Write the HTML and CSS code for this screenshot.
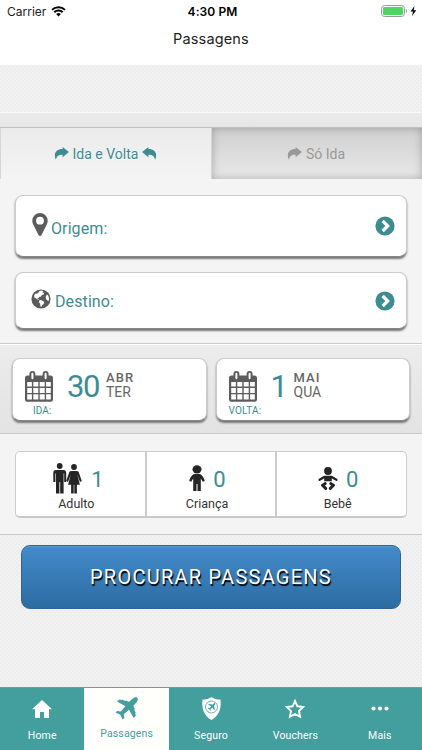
FILE: index.html
```
<!DOCTYPE html>
<html lang="pt-BR">
<head>
<meta charset="utf-8">
<title>Passagens</title>
<link rel="stylesheet" href="styles.css">
</head>
<body>
<svg class="defs" width="0" height="0">
  <defs>
    <symbol id="share" viewBox="0 0 15 13"><path d="M8.600 0 14.900 5.100 8.600 10.200V7.700C5 7.400 2.800 8.600 1.900 12.800-.9 7 2 2.100 8.600 2.100Z"/></symbol>
    <symbol id="chevron" viewBox="0 0 20 20"><circle cx="10" cy="10" r="9.600"/><path d="M7.700 5 12.700 10 7.700 15" fill="none" stroke="#fff" stroke-width="3.200"/></symbol>
    <symbol id="calendar" viewBox="0 0 28 31"><path fill-rule="evenodd" d="M2.500 4.500H4.400V3a3 3 0 0 1 6 0V4.500h7.200V3a3 3 0 0 1 6 0V4.500h1.900A2.500 2.500 0 0 1 28 7v21.500a2.300 2.300 0 0 1-2.500 2.300h-23A2.300 2.300 0 0 1 0 28.500V7a2.500 2.500 0 0 1 2.500-2.500ZM2.200 11v4.500h4.700V11Zm6.100 0v4.500h5V11Zm6.400 0v4.500h5V11Zm6.400 0v4.500h4.700V11ZM2.200 16.900v5h4.700v-5Zm6.100 0v5h5v-5Zm6.400 0v5h5v-5Zm6.400 0v5h4.700v-5ZM2.200 23.300v5.300h4.700v-5.300Zm6.100 0v5.300h5v-5.300Zm6.400 0v5.300h5v-5.300Zm6.400 0v5.300h4.700v-5.300Z"/><path d="M7.400 2.800v4.500M20.600 2.800v4.500" stroke="#fff" stroke-width="2" stroke-linecap="round"/></symbol>
    <symbol id="plane" viewBox="0 0 24 24"><path d="M23.200.8c-1.200-1-3.300-.5-5 1.100L14.800 5l-2-.5-.8-.9-1 .5-2.100-.6-.8-.8-1 .4-2.600-.5L2.200 4.700l8.600 5-4.700 5.500-4-.6L.6 16.100l5 2.500L8 23.500l1.700-1.700-.6-3.900 5.500-4.700 5 8.600 2.100-2.300-.5-2.600.4-1-.8-.8-.6-2.100.5-1-.9-.8-.5-2 2.900-3.400C23.800 4.100 24.300 2 23.200.8Z"/></symbol>
  </defs>
</svg>
<header class="top">
  <div class="status">
    <div class="carrier">Carrier
      <svg width="15" height="11" viewBox="0 0 15 11"><path d="M1 3.900a9.200 9.200 0 0 1 13 0M3.300 6.300a6 6 0 0 1 8.400 0" fill="none" stroke="#000" stroke-width="2"/><path d="M5.100 8.100a3.400 3.400 0 0 1 4.800 0L7.500 10.600Z"/></svg>
    </div>
    <div class="clock">4:30 PM</div>
    <svg class="battery" width="36" height="12" viewBox="0 0 36 12"><rect x=".5" y=".5" width="23" height="11" rx="3" fill="#fff" stroke="#999"/><rect x="2" y="2" width="20" height="8" rx="1.300" fill="#4cd764"/><path d="M25 4v4c1.400-.6 1.400-3.400 0-4Z" fill="#999"/><path d="M33.500 1 29.500 6.500h2.600L31 11l4.300-5.700h-2.700Z"/></svg>
  </div>
  <h1>Passagens</h1>
</header>
<main>
  <div class="strip"></div>
  <div class="tabs">
    <div class="tab on"><svg width="15" height="13"><use href="#share"/></svg><span>Ida e Volta</span><svg class="flip" width="15" height="13"><use href="#share"/></svg></div>
    <div class="tab off"><svg width="15" height="13"><use href="#share"/></svg><span>Só Ida</span></div>
  </div>
  <section class="places">
    <div class="card place origin">
      <svg width="16" height="23" viewBox="0 0 16 23"><path fill-rule="evenodd" d="M8 0a7.700 7.700 0 0 1 7.700 7.700c0 2-.7 3-1.200 4.200L9.500 22a1.700 1.700 0 0 1-3 0L1.500 11.900C1 10.700.3 9.700.3 7.700A7.700 7.700 0 0 1 8 0Zm0 3.800a3.900 3.900 0 1 0 0 7.800 3.900 3.900 0 0 0 0-7.800Z"/></svg>
      <span>Origem:</span><svg class="go" width="20" height="20"><use href="#chevron"/></svg>
    </div>
    <div class="card place dest">
      <svg width="20" height="20" viewBox="0 0 20 20"><circle cx="10" cy="10" r="9.600"/><path fill="#fff" d="m8.500 2 2.500-.5 1.400 1-1.300 1.100 1.600.2.300 1.500-2 .8-1.300 1.600-1.400.1-.5 1.100-1.300-.2-.2.900 1.200.5.200.8-1.500-.6L3.500 8.500 3 6.700 4.500 4.500 6 4.700 7.500 3.500ZM8.200 11.500l1.600-.4 2.100 1 1.300 1-.5 1.800-1.500 1-.8 1.900-.9-.2-.3-2.800-1.300-1.500ZM15.200 6.500l1.500-.8 1.200 2.600.1 3.200-1.200.3-1.600-1.500-.6-2Z"/></svg>
      <span>Destino:</span><svg class="go" width="20" height="20"><use href="#chevron"/></svg>
    </div>
  </section>
  <section class="dates">
    <div class="card date">
      <div class="cal"><svg width="28" height="31"><use href="#calendar"/></svg><small>IDA:</small></div>
      <div class="num">30</div><div class="md"><b>ABR</b><span>TER</span></div>
    </div>
    <div class="card date back">
      <div class="cal"><svg width="28" height="31"><use href="#calendar"/></svg><small>VOLTA:</small></div>
      <div class="num">1</div><div class="md"><b>MAI</b><span>QUA</span></div>
    </div>
  </section>
  <section class="people">
    <div class="group">
      <div class="pax"><div class="row"><svg width="29" height="31" viewBox="0 0 29 31"><circle cx="6.700" cy="3" r="2.900"/><path d="M3 7h7.500c1.700 0 2.700 1 2.700 3v9h-2V10.500h-.6v20H7.200V19h-.8v11.500H3V10.500h-.6V19H.3V10C.3 8 1.300 7 3 7Z"/><circle cx="21" cy="4" r="2.900"/><path d="M18.500 8h5c1.800 0 2.200.8 2.600 2.300l2.700 7.700-1.800.9-2.700-7.400 2.600 10.200h-3v8.800h-2.600v-8.800h-.6v8.800h-2.600v-8.800h-3l2.600-10.200-2.700 7.400-1.800-.9 2.700-7.700C16.300 8.800 16.700 8 18.500 8Z"/></svg><em>1</em></div><span>Adulto</span></div>
      <div class="pax kid"><div class="row"><svg width="16" height="27" viewBox="0 0 16 27"><ellipse cx="8" cy="4.300" rx="4.500" ry="4.100"/><path d="M5.500 9h5c2 0 5 4.500 5.200 7l-1.900.7-2-3.200V26H8.500v-7h-1v7H4.200V13.500l-2 3.200-1.900-.7C.5 13.500 3.500 9 5.500 9Z"/></svg><em>0</em></div><span>Criança</span></div>
      <div class="pax baby"><div class="row"><svg width="20" height="23" viewBox="0 0 20 23"><circle cx="10" cy="4" r="3.900"/><path d="m1.600 12.800 4.800-2.800h7.200l4.800 2.800" fill="none" stroke="#242424" stroke-width="2.300" stroke-linecap="round"/><path d="M6.200 9h7.600v5.300H6.200Z"/><path d="M7.300 16.600 4.500 18.200l3.200 3.200M12.700 16.600l2.800 1.600-3.200 3.200" fill="none" stroke="#242424" stroke-width="2.900" stroke-linecap="round" stroke-linejoin="round"/></svg><em>0</em></div><span>Bebê</span></div>
    </div>
  </section>
  <div class="action"><div class="search">PROCURAR PASSAGENS</div></div>
</main>
<nav>
  <div class="item"><svg width="20" height="18" viewBox="0 0 20 18"><path d="M10 0 20 9.200h-3V18h-5v-6H8v6H3V9.200H0Z"/></svg><span>Home</span></div>
  <div class="item current"><svg width="23" height="23"><use href="#plane"/></svg><span>Passagens</span></div>
  <div class="item shield"><svg width="19" height="23" viewBox="0 0 19 23"><path d="M9.500 0C12 2 15 2.500 18.500 2.600 19.500 12 17 19 9.500 23 2 19-.5 12 .5 2.600 4 2.500 7 2 9.500 0Z"/><circle cx="9.500" cy="10" r="6" fill="none" stroke="#429f9d" stroke-width=".8"/><use href="#plane" x="5.500" y="6" width="8" height="8" fill="#429f9d"/></svg><span>Seguro</span></div>
  <div class="item"><svg width="20" height="20" viewBox="0 0 20 20"><path d="m10 2 2.400 5.300 5.800.7-4.200 4 1.100 5.800L10 15l-5.100 2.800L6 12 1.800 8l5.800-.7Z" fill="none" stroke="#fff" stroke-width="1.900"/></svg><span>Vouchers</span></div>
  <div class="item"><svg width="18" height="5" viewBox="0 0 18 5"><circle cx="2.500" cy="2.500" r="2.100"/><circle cx="9" cy="2.500" r="2.100"/><circle cx="15.500" cy="2.500" r="2.100"/></svg><span>Mais</span></div>
</nav>
</body>
</html>
```
FILE: styles.css
```
* { box-sizing: border-box; }
body { margin: 0; width: 422px; height: 750px; overflow: hidden; display: flex; flex-direction: column; font-family: Roboto, sans-serif; color: #333;
  background: repeating-conic-gradient(#ededed 0 25%, #f2f2f2 0 50%) 0 0 / 4px 4px; }
svg { display: block; flex: none; }
.defs { position: absolute; }
.top { height: 65px; background: #fff; font-family: Inter, sans-serif; }
.status { height: 22px; display: grid; grid-template-columns: 1fr auto 1fr; align-items: center; padding: 0 5px 0 7px; font-size: 12px; color: #000; }
.carrier { display: flex; align-items: center; gap: 5px; color: #222; }
.clock { font-weight: 600; font-size: 12px; letter-spacing: .1px; padding-left: 1px; }
.battery { justify-self: end; }
h1 { margin: 8px 0 0; font-size: 14.500px; line-height: 18px; font-weight: 400; text-align: center; letter-spacing: .15px; color: #222; }
main { flex: 1; }
.strip { margin-top: 47px; height: 16px; background: linear-gradient(#ececec, #e6e6e6); border-top: 1px solid #f8f8f8; border-bottom: 1px solid #c0c0c0; }
.tabs { height: 51px; display: flex; }
.tab { width: 212px; display: flex; align-items: center; justify-content: center; font-size: 14px; gap: 3px; }
.on { padding-right: 1px; background: linear-gradient(#ebebeb, #f4f4f4); border: 1px solid #d5d5d5; border-width: 0 1px; color: #3c8c92; fill: #3c8c92; text-shadow: 0 1px 1px #fff; }
.on { gap: 4px; }
.off { width: 210px; padding-right: 2px; color: #999; fill: #999; gap: 4px; background: linear-gradient(#d0d0d0, #e8e8e8); box-shadow: inset 0 0 9px rgba(0,0,0,.25); }
.flip { transform: scaleX(-1); }
.places { height: 165px; padding: 16px 15px 0; background: #f4f4f4; display: flex; flex-direction: column; gap: 15px; border-bottom: 1px solid #ccc; }
.card { background: #fff; border: 1px solid #ccc; border-bottom-color: #888; border-radius: 8px; box-shadow: 0 2px 2px #777; }
.place { display: flex; align-items: center; color: #3c8c92; font-size: 16px; fill: #5c5c5c; }
.origin { height: 62px; padding: 0 11px 0 16px; }
.dest { height: 57px; padding: 0 11px 0 15px; }
.origin > svg:first-child { margin-top: -4px; }
.origin span { margin: 5px 0 0 3px; letter-spacing: .1px; }
.dest > svg:first-child { margin-top: -4px; }
.dest span { margin: 1px 0 0 4px; letter-spacing: .1px; }
.go { margin-left: auto; margin-top: -1px; fill: #3c8c92; }
.dest .go { margin-top: 0; }
.dates { height: 90px; padding: 13px 12px 0; display: flex; gap: 9px; background: linear-gradient(#ececec, #e3e3e3); border-bottom: 1px solid #ccc; border-top: 1px solid #fff; }
.date { width: 195px; height: 63px; display: flex; padding: 12px 0 0 12px; }
.cal { width: 36px; display: flex; flex-direction: column; align-items: flex-start; fill: #5c5c5c; }
.cal small { font-size: 10px; line-height: 12px; margin: 3px 0 0 8px; color: #3c8c92; white-space: nowrap; }
.back .cal small { margin-left: 0; letter-spacing: .2px; }
.num { width: 34px; margin-left: 5px; font-size: 31px; line-height: 32px; letter-spacing: -1.500px; color: #3c8c92; text-align: center; }
.back .num { margin-left: -3px; }
.md { margin-left: 6px; font-size: 14px; line-height: 14px; color: #666; display: flex; flex-direction: column; }
.md b { font-size: 13px; font-weight: 500; letter-spacing: 1.100px; }
.back .md { margin-left: -2px; }
.people { height: 101px; padding: 17px 15px 0; background: #f4f4f4; border-bottom: 1px solid #ccc; }
.group { height: 67px; display: flex; border: 1px solid #ccc; border-bottom: 2px solid #c8c8c8; border-radius: 5px; background: #fff; }
.pax { flex: 1; display: flex; flex-direction: column; align-items: center; font-size: 12.500px; padding: 9px 8px 0 0; }
.pax + .pax { border-left: 2px solid #ccc; }
.row { height: 34px; display: flex; align-items: center; gap: 9px; margin-left: 4px; fill: #242424; }
.kid .row { margin-left: 1px; gap: 8px; }
.baby .row { margin-left: 1px; gap: 8px; }
.row em { font-style: normal; font-size: 22px; line-height: 30px; padding-top: 4px; color: #3c8c92; }
.pax > span { line-height: 17px; }
.action { padding: 10px 21px 0; }
.search { height: 64px; border: 1px solid #2d6495; border-radius: 9px; background: linear-gradient(#428bca, #2d6ca2); box-shadow: inset 0 1px 0 rgba(255,255,255,.15); color: #fff; font-size: 20px; line-height: 62px; text-align: center; letter-spacing: 1.250px; text-shadow: 1px 2px 1px #000; }
nav { height: 63px; display: flex; border-top: 1px solid #6e9c9b; background: #429f9d; color: #fff; fill: #fff; }
.item { flex: 1; display: grid; grid-template-rows: 41px 13px; justify-items: center; align-items: center; font-size: 10.500px; letter-spacing: .15px; }
.current { background: #fffffc; color: #429f9d; fill: #429f9d; grid-template-rows: 40px 11px; }
```
